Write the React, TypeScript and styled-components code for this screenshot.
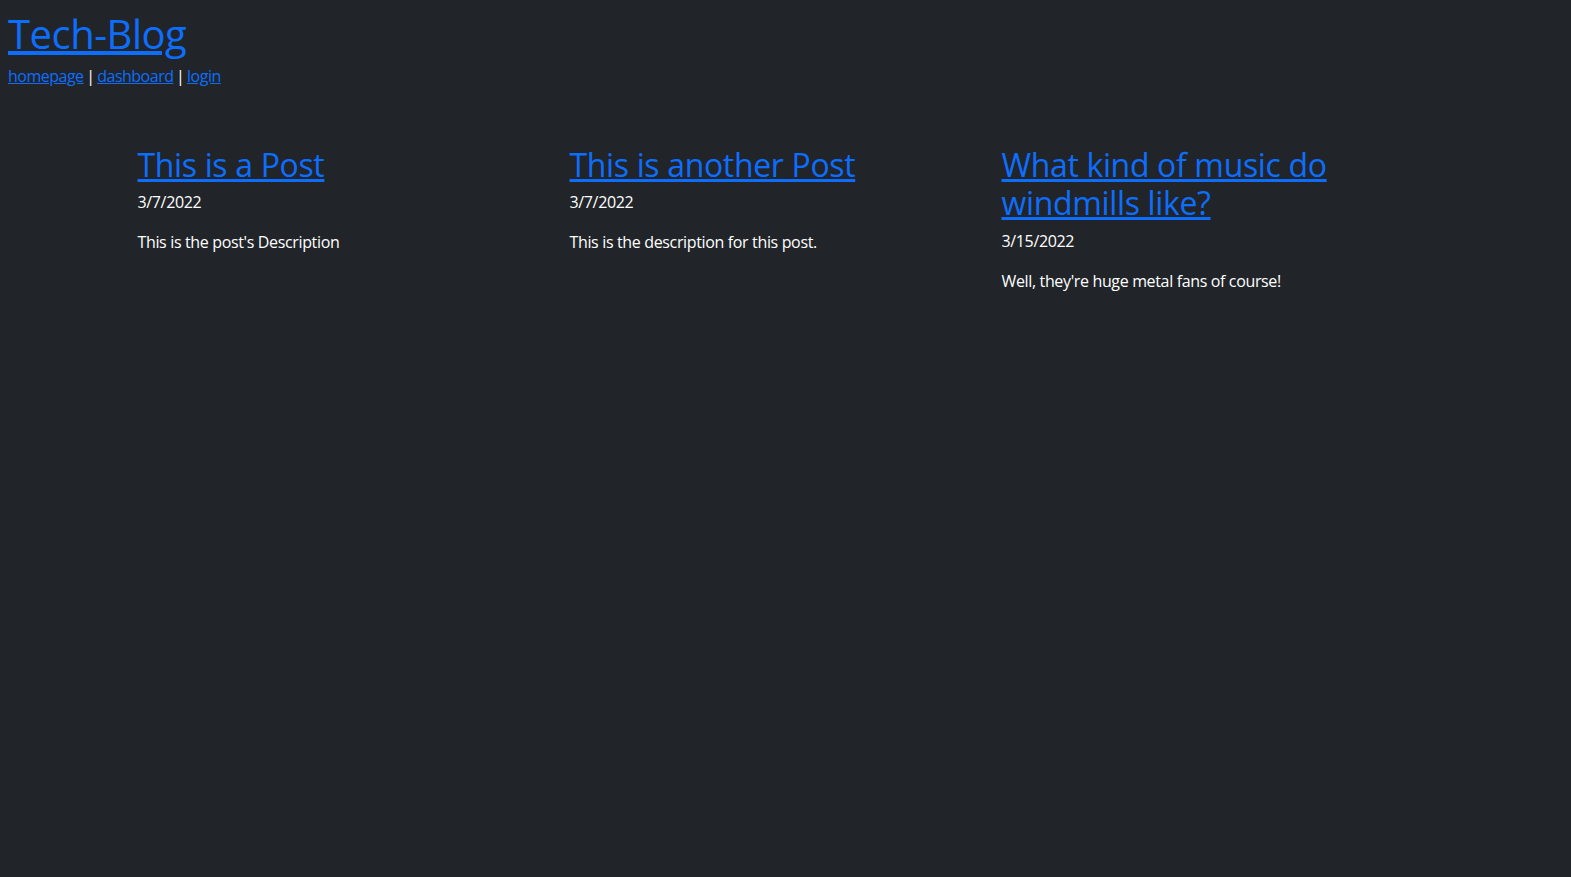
import React from "react";
import styled, { createGlobalStyle } from "styled-components";

const Global = createGlobalStyle`
  html, body { margin: 0; padding: 0; }
  body {
    background: #212529;
    color: #ffffff;
    font-family: "Open Sans", "Noto Sans", sans-serif;
    font-size: 16px;
    line-height: 1.5;
    letter-spacing: -0.35px;
    min-height: 877px;
  }
  a { color: #0d6efd; text-decoration: underline; }
`;

const Header = styled.header`
  padding: 8px 8px 8px;
`;

const SiteTitle = styled.h1`
  margin: 0 0 8px;
  font-size: 40px;
  font-weight: 500;
  line-height: 1.2;
  letter-spacing: -0.5px;
  padding-top: 2px;
  height: 46px;
`;

const Nav = styled.nav`
  font-size: 16px;
  line-height: 24px;
  letter-spacing: -0.5px;
  word-spacing: -1px;
`;

const Container = styled.main`
  max-width: 1296px;
  margin: 48px auto 0;
  display: grid;
  grid-template-columns: repeat(3, 1fr);
`;

const Post = styled.article`
  padding-right: 24px;
`;

const PostTitle = styled.h2`
  margin: 0 0 8px;
  font-size: 32px;
  font-weight: 500;
  line-height: 1.2;
  letter-spacing: -0.35px;
  position: relative;
  top: 2px;
`;

const PostDate = styled.p`
  margin: 0 0 16px;
`;

const PostBody = styled.p`
  margin: 0 0 16px;
`;

const posts = [
  { title: "This is a Post", date: "3/7/2022", body: "This is the post's Description" },
  { title: "This is another Post", date: "3/7/2022", body: "This is the description for this post." },
  { title: "What kind of music do windmills like?", date: "3/15/2022", body: "Well, they're huge metal fans of course!" },
];

export default function App() {
  return (
    <>
      <Global />
      <Header>
        <SiteTitle>
          <a href="#">Tech-Blog</a>
        </SiteTitle>
        <Nav>
          <a href="#">homepage</a> | <a href="#">dashboard</a> | <a href="#">login</a>
        </Nav>
      </Header>
      <Container>
        {posts.map((p) => (
          <Post key={p.title}>
            <PostTitle>
              <a href="#">{p.title}</a>
            </PostTitle>
            <PostDate>{p.date}</PostDate>
            <PostBody>{p.body}</PostBody>
          </Post>
        ))}
      </Container>
    </>
  );
}
